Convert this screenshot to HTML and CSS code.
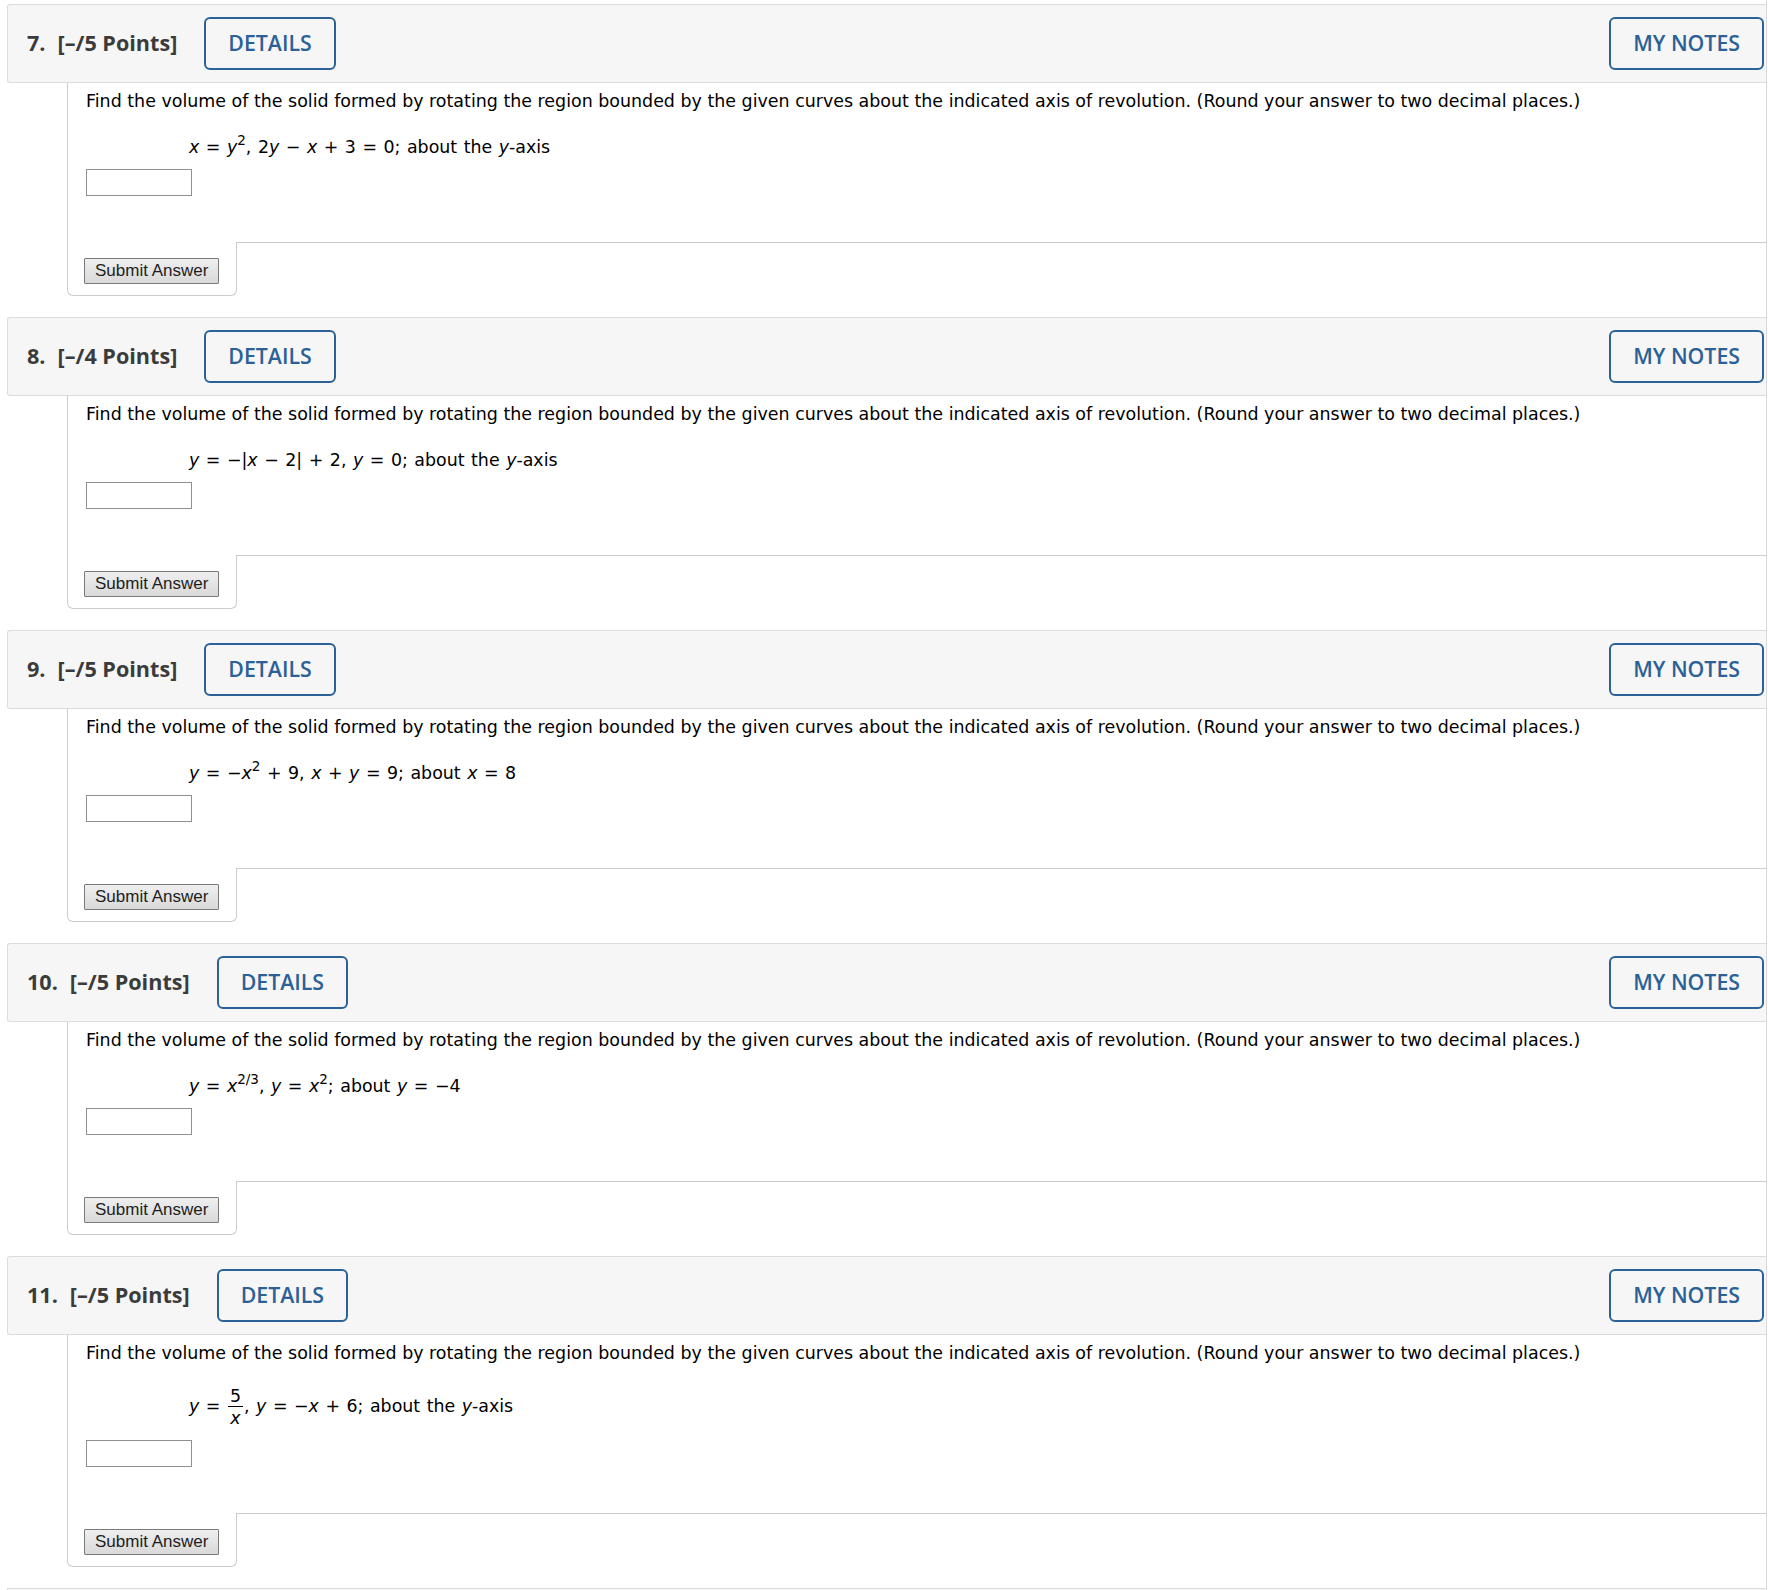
FILE: index.html
```html
<!DOCTYPE html>
<html lang="en">
<head>
<meta charset="utf-8">
<title>Questions</title>
<link rel="stylesheet" href="styles.css">
</head>
<body>
<div class="wrap">

  <section class="q">
    <div class="q-head">
      <span class="q-num">7.</span>
      <span class="q-pts">[–/5 Points]</span>
      <button class="btn-outline">DETAILS</button>
      <button class="btn-outline notes">MY NOTES</button>
    </div>
    <div class="q-body">
      <p class="prompt">Find the volume of the solid formed by rotating the region bounded by the given curves about the indicated axis of revolution. (Round your answer to two decimal places.)</p>
      <p class="eq"><var>x</var> = <var>y</var><sup>2</sup>, 2<var>y</var> − <var>x</var> + 3 = 0; about the <var>y</var>-axis</p>
      <input class="answer" type="text">
    </div>
    <div class="q-foot">
      <div class="submit-tab"><button class="submit">Submit Answer</button></div>
      <div class="foot-fill"></div>
    </div>
  </section>

  <section class="q">
    <div class="q-head">
      <span class="q-num">8.</span>
      <span class="q-pts">[–/4 Points]</span>
      <button class="btn-outline">DETAILS</button>
      <button class="btn-outline notes">MY NOTES</button>
    </div>
    <div class="q-body">
      <p class="prompt">Find the volume of the solid formed by rotating the region bounded by the given curves about the indicated axis of revolution. (Round your answer to two decimal places.)</p>
      <p class="eq"><var>y</var> = −|<var>x</var> − 2| + 2, <var>y</var> = 0; about the <var>y</var>-axis</p>
      <input class="answer" type="text">
    </div>
    <div class="q-foot">
      <div class="submit-tab"><button class="submit">Submit Answer</button></div>
      <div class="foot-fill"></div>
    </div>
  </section>

  <section class="q">
    <div class="q-head">
      <span class="q-num">9.</span>
      <span class="q-pts">[–/5 Points]</span>
      <button class="btn-outline">DETAILS</button>
      <button class="btn-outline notes">MY NOTES</button>
    </div>
    <div class="q-body">
      <p class="prompt">Find the volume of the solid formed by rotating the region bounded by the given curves about the indicated axis of revolution. (Round your answer to two decimal places.)</p>
      <p class="eq"><var>y</var> = −<var>x</var><sup>2</sup> + 9, <var>x</var> + <var>y</var> = 9; about <var>x</var> = 8</p>
      <input class="answer" type="text">
    </div>
    <div class="q-foot">
      <div class="submit-tab"><button class="submit">Submit Answer</button></div>
      <div class="foot-fill"></div>
    </div>
  </section>

  <section class="q">
    <div class="q-head">
      <span class="q-num">10.</span>
      <span class="q-pts">[–/5 Points]</span>
      <button class="btn-outline">DETAILS</button>
      <button class="btn-outline notes">MY NOTES</button>
    </div>
    <div class="q-body">
      <p class="prompt">Find the volume of the solid formed by rotating the region bounded by the given curves about the indicated axis of revolution. (Round your answer to two decimal places.)</p>
      <p class="eq"><var>y</var> = <var>x</var><sup>2/3</sup>, <var>y</var> = <var>x</var><sup>2</sup>; about <var>y</var> = −4</p>
      <input class="answer" type="text">
    </div>
    <div class="q-foot">
      <div class="submit-tab"><button class="submit">Submit Answer</button></div>
      <div class="foot-fill"></div>
    </div>
  </section>

  <section class="q">
    <div class="q-head">
      <span class="q-num">11.</span>
      <span class="q-pts">[–/5 Points]</span>
      <button class="btn-outline">DETAILS</button>
      <button class="btn-outline notes">MY NOTES</button>
    </div>
    <div class="q-body">
      <p class="prompt">Find the volume of the solid formed by rotating the region bounded by the given curves about the indicated axis of revolution. (Round your answer to two decimal places.)</p>
      <p class="eq eq-tall"><var>y</var> = <span class="frac"><span class="frac-num">5</span><span class="frac-den"><var>x</var></span></span>, <var>y</var> = −<var>x</var> + 6; about the <var>y</var>-axis</p>
      <input class="answer" type="text">
    </div>
    <div class="q-foot">
      <div class="submit-tab"><button class="submit">Submit Answer</button></div>
      <div class="foot-fill"></div>
    </div>
  </section>

  <div class="q-next"></div>
</div>
</body>
</html>
```

FILE: styles.css
```css
* {
  box-sizing: border-box;
}

html, body {
  margin: 0;
  padding: 0;
  background: #ffffff;
}

body {
  font-family: "DejaVu Sans", Verdana, sans-serif;
  color: #000000;
  overflow: hidden;
}

.wrap {
  margin-left: 7px;
  width: 1760px;
  height: 1590px;
  padding-top: 4px;
  border-right: 1px solid #d9d9d9;
}

.q {
  margin-bottom: 21px;
}

.q-head {
  display: flex;
  align-items: center;
  height: 79px;
  padding-left: 19px;
  background: #f6f6f6;
  border: 1px solid #dcdcdc;
  border-right: none;
  border-radius: 3px 0 0 3px;
}

.q-num,
.q-pts {
  margin-bottom: 2px;
  font-family: "Open Sans", "DejaVu Sans", sans-serif;
  font-weight: 700;
  font-size: 21.6px;
  color: #3b3b3b;
}

.q-num {
  margin-right: 12px;
}

.btn-outline {
  height: 53px;
  margin-left: 27px;
  padding: 0 22px 3px;
  font-family: "Open Sans", "DejaVu Sans", sans-serif;
  font-weight: 600;
  font-size: 21.3px;
  color: #2b6197;
  background: transparent;
  border: 2px solid #2b6197;
  border-radius: 6px;
}

.notes {
  margin-left: auto;
  margin-right: 2px;
  padding: 0 22px 3px;
}

.q-body {
  margin-left: 60px;
  padding: 6px 0 46px 18px;
  border-left: 1px solid #cccccc;
}

.prompt {
  margin: 0;
  font-size: 17.45px;
  line-height: 24px;
}

.eq {
  margin: 22px 0 0 103px;
  font-size: 17.4px;
  line-height: 24px;
  word-spacing: 1px;
}

.eq var {
  font-style: italic;
}

.eq sup {
  font-size: 13.5px;
  line-height: 0;
  vertical-align: 8px;
}

.eq-tall {
  margin-top: 20px;
  line-height: 43px;
  height: 43px;
}

.frac {
  display: inline-flex;
  flex-direction: column;
  align-items: center;
  vertical-align: middle;
  line-height: 19px;
  margin: 0 1px;
}

.frac-num {
  padding: 0 2px;
  border-bottom: 1px solid #000000;
}

.frac-den {
  padding-top: 2px;
}

.answer {
  display: block;
  margin-top: 10px;
  width: 106px;
  height: 27px;
  padding: 0 4px;
  border: 1px solid #8f8f8f;
  background: #ffffff;
  font-size: 16px;
}

.eq-tall + .answer {
  margin-top: 12px;
}

.q-foot {
  display: flex;
  margin-left: 60px;
}

.submit-tab {
  padding: 16px 17px 11px 16px;
  border: 1px solid #cccccc;
  border-top: none;
  border-radius: 0 0 6px 6px;
}

.submit {
  display: block;
  height: 26px;
  padding: 0 10px;
  font-family: "Liberation Sans", Arial, sans-serif;
  font-size: 17px;
  color: #1e1e1e;
  background: linear-gradient(#efefef, #d9d9d9);
  border: 1px solid #7a7a7a;
  border-radius: 1px;
}

.foot-fill {
  flex: 1;
  border-top: 1px solid #cccccc;
}

.q-next {
  height: 3px;
  border-top: 1px solid #dcdcdc;
  border-left: 1px solid #dcdcdc;
  background: #f6f6f6;
}
```
